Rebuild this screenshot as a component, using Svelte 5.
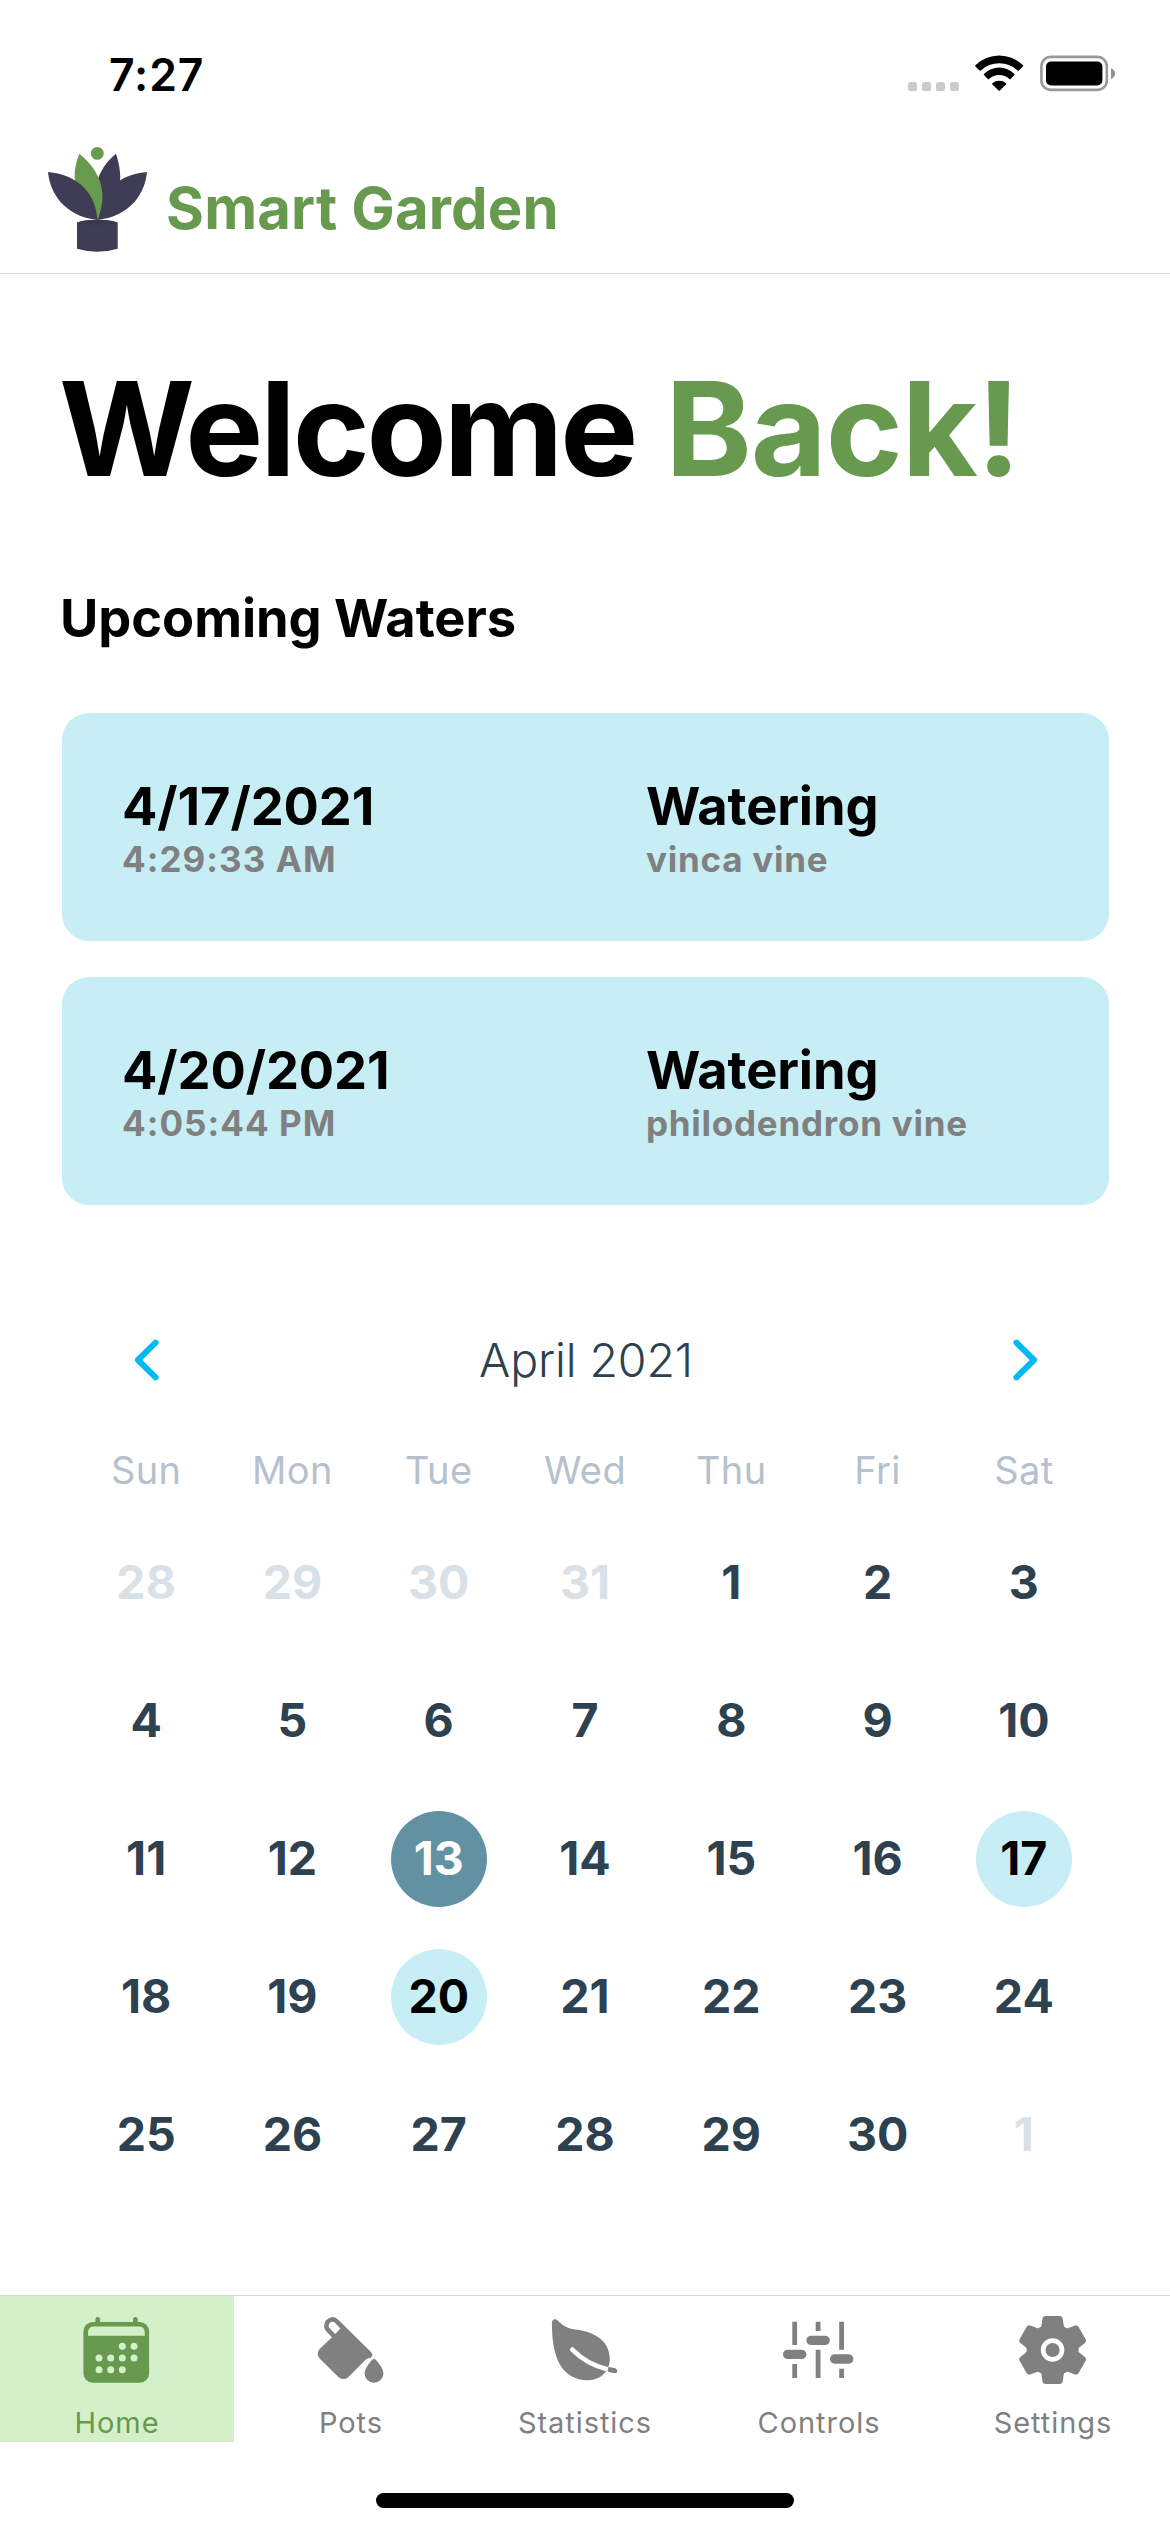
<script>
  const waters = [
    { date: '4/17/2021', time: '4:29:33 AM', plant: 'vinca vine' },
    { date: '4/20/2021', time: '4:05:44 PM', plant: 'philodendron vine' }
  ];
  const weekdays = ['Sun', 'Mon', 'Tue', 'Wed', 'Thu', 'Fri', 'Sat'];

  // 35 cells starting at Sunday, March 28
  const days = Array.from({ length: 35 }, (_, i) => {
    const n = i - 3;
    if (n < 1) return { label: 31 + n, kind: 'outside' };
    if (n > 30) return { label: n - 30, kind: 'outside' };
    const kind = n === 13 ? 'today' : n === 17 || n === 20 ? 'marked' : '';
    return { label: n, kind };
  });

  const tabs = ['Home', 'Pots', 'Statistics', 'Controls', 'Settings'];
  const dots = [
    [50.3, 41.3], [62, 41.3],
    [27, 53], [38.7, 53], [50.3, 53], [62, 53],
    [27, 64.7], [38.7, 64.7], [50.3, 64.7]
  ];
  const teeth = [0, 60, 120, 180, 240, 300];
</script>

<div class="screen">
  <div class="status">
    <span class="clock">7:27</span>
    <div class="indicators">
      <svg width="51" height="36" viewBox="0 0 51 36" fill="#cbcbcb">
        <rect x="0" y="27" width="9" height="9" rx="2.6" />
        <rect x="14" y="27" width="9" height="9" rx="2.6" />
        <rect x="28" y="27" width="9" height="9" rx="2.6" />
        <rect x="42" y="27" width="9" height="9" rx="2.6" />
      </svg>
      <svg width="49" height="36" viewBox="0 0 49 36">
        <path d="M0.4 10.2A34 34 0 0 1 48 10.2Q48.6 10.8 48 11.4L43.8 15.4Q43.2 16 42.6 15.4A27 27 0 0 0 5.8 15.4Q5.2 16 4.6 15.4L0.4 11.4Q-0.2 10.8 0.4 10.2Z" />
        <path d="M9 18.9A21.5 21.5 0 0 1 39.4 18.9Q40 19.5 39.4 20.1L35.6 23.9Q35 24.5 34.4 23.9A15.5 15.5 0 0 0 14 23.9Q13.4 24.5 12.8 23.9L9 20.1Q8.4 19.5 9 18.9Z" />
        <path d="M17.4 28.2A10.6 10.6 0 0 1 31 28.2Q31.6 28.8 31 29.4L24.8 35.6Q24.2 36.2 23.6 35.6L17.4 29.4Q16.8 28.8 17.4 28.2Z" />
      </svg>
      <svg width="75" height="37" viewBox="0 0 75 37">
        <rect x="1.4" y="1.9" width="65.4" height="33" rx="9.5" fill="none" stroke="#999" stroke-width="2.6" />
        <rect x="6" y="6.5" width="56.4" height="24" rx="5" />
        <path d="M71 13.2Q75 14.7 75 18.6T71 24.2Z" fill="#8f8f8f" />
      </svg>
    </div>
  </div>

  <header>
    <svg class="logo" width="100" height="106" viewBox="0 0 100 106">
      <g fill="#3f3d56">
        <path d="M68 6.7C54 18 41 38 49.3 73C74 58 76 30 68 6.7Z" />
        <path d="M99 25C68 28 50 47 49.3 73C83 69 97 46 99 25Z" />
      </g>
      <path d="M31.3 6.7C24 25 22 48 49.3 73C60 48 54 25 31.3 6.7Z" fill="#679b4e" />
      <g fill="#3f3d56">
        <path d="M0 25C31 28 48 47 49.3 73C16 69 2 46 0 25Z" />
        <path d="M29 75.2Q49.3 70.2 69.7 75.2V101.7Q49.3 107.7 29 101.7Z" />
      </g>
      <ellipse cx="49.3" cy="75.2" rx="18" ry="2.5" fill="#3a3850" />
      <circle cx="49.3" cy="6.4" r="6.4" fill="#679b4e" />
    </svg>
    <span class="brand">Smart Garden</span>
  </header>

  <main>
    <h1><span>Welcome</span> <span class="back">Back!</span></h1>
    <h2>Upcoming Waters</h2>

    <div class="cards">
      {#each waters as w}
        <section class="card">
          <div>
            <div class="lead">{w.date}</div>
            <div class="sub time">{w.time}</div>
          </div>
          <div>
            <div class="lead">Watering</div>
            <div class="sub">{w.plant}</div>
          </div>
        </section>
      {/each}
    </div>

    <section class="calendar">
      <div class="month">
        <svg width="32" height="48" viewBox="0 0 32 48"><path d="M25.6 6.6L8 24L25.6 41.4" /></svg>
        <span>April 2021</span>
        <svg width="32" height="48" viewBox="0 0 32 48"><path d="M6.4 6.6L24 24L6.4 41.4" /></svg>
      </div>
      <div class="weekdays">
        {#each weekdays as d}<span>{d}</span>{/each}
      </div>
      <div class="days">
        {#each days as d}<div class="cell"><span class="day {d.kind}">{d.label}</span></div>{/each}
      </div>
    </section>
  </main>

  <nav>
    {#each tabs as tab}
      <div class="tab" class:active={tab === 'Home'}>
        <svg width="90" height="90" viewBox="0 0 90 90" fill="currentColor">
          {#if tab === 'Home'}
            <rect x="23.4" y="12" width="4.7" height="9" rx="2.3" />
            <rect x="61" y="12" width="4.7" height="9" rx="2.3" />
            <rect x="11.4" y="17" width="65.7" height="60.7" rx="9.5" />
            <path class="cut" d="M16.1 30.7V27.3Q16.1 21.4 22 21.4H66.8Q72.7 21.4 72.7 27.3V30.7Z" />
            {#each dots as [x, y]}<circle class="cut" cx={x} cy={y} r="3.5" />{/each}
          {:else if tab === 'Pots'}
            <path
              fill-rule="evenodd"
              d="M32 14.4L65.2 47.2Q67.4 49.6 65.4 52Q64.6 53.2 62.6 53.2Q61 53.4 59.6 54.8L42.2 72.2Q37.4 76 32.6 72.2L13.6 53.4Q9.8 48.8 13.6 44L26 32.2L20.4 26.6Q16 21.4 19.8 15.6Q25.6 9.2 32 14.4ZM29 17.8Q26.2 15.6 23.6 18.2Q21.4 21 23.8 23.6L29.2 29L34.4 23.4Z"
            />
            <path d="M66 55Q68 52.8 70 55C73 58.4 77.4 63.8 77.4 68.6A9.4 9.2 0 0 1 58.6 68.6C58.6 63.8 63 58.4 66 55Z" />
          {:else if tab === 'Statistics'}
            <path d="M11.9 18C11.9 14.2 15.4 13 18.2 16C23.6 21.4 28 23.4 35 24.4C50 26 69.8 33 69.8 54C69.8 66 60.5 75.2 48.3 75.2C21 75.2 11.9 52 11.9 18Z" />
            <path class="vein" d="M32.3 44.6Q47 59.5 67.4 64.2" />
            <path class="halo" d="M66.6 64L68 64.4" />
            <path class="stem" d="M68 64.3L75 65.7" />
            <path class="stem-end" d="M71 64.9L75 65.7" />
          {:else if tab === 'Controls'}
            <path d="M18.3 16.7h4.8V40h-4.8zM18.3 59h4.8V73h-4.8zM41.7 16.7h4.8V26h-4.8zM41.7 44.7h4.8V73h-4.8zM65.2 16.7h4.8V44.7h-4.8zM65.2 63.7h4.8V73h-4.8z" />
            <rect x="9" y="44.7" width="23.4" height="9.4" rx="4.7" />
            <rect x="32.4" y="30.7" width="23.4" height="9.4" rx="4.7" />
            <rect x="56" y="49.3" width="23.4" height="9.4" rx="4.7" />
          {:else}
            <g transform="translate(44.6 45)">
              <circle r="26" />
              {#each teeth as a}
                <path
                  transform="rotate({a})"
                  d="M-15.5 -21Q-11.8 -21.2 -11.2 -24L-10.2 -31Q-9.7 -34 -6.8 -34H6.8Q9.7 -34 10.2 -31L11.2 -24Q11.8 -21.2 15.5 -21Z"
                />
              {/each}
              <circle class="ring" r="9.4" />
            </g>
          {/if}
        </svg>
        <span>{tab}</span>
      </div>
    {/each}
  </nav>
  <div class="home-bar"></div>
</div>

<style>
  :global(body) {
    background: #fff;
  }
  .screen {
    width: 1170px;
    height: 2532px;
    display: flex;
    flex-direction: column;
    overflow: hidden;
    background: #fff;
    color: #000;
    font-family: Inter, 'Liberation Sans', sans-serif;
  }
  svg {
    display: block;
    flex: none;
  }
  .status {
    height: 132px;
    box-sizing: border-box;
    display: flex;
    justify-content: space-between;
    align-items: flex-start;
    padding: 55px 55px 0 109px;
  }
  .clock {
    font-size: 44.5px;
    font-weight: 600;
    line-height: 40px;
    letter-spacing: 0.9px;
  }
  .indicators {
    display: flex;
    gap: 16px;
  }
  header {
    height: 142px;
    box-sizing: border-box;
    border-bottom: 1px solid #d8d8d8;
    display: flex;
    align-items: flex-start;
    padding: 15px 0 0 48px;
  }
  .brand {
    margin: 26px 0 0 18px;
    font-size: 58px;
    font-weight: 700;
    line-height: 70px;
    letter-spacing: 0.15px;
    color: #67994f;
  }
  main {
    flex: 1;
    padding: 0 61px 0 62px;
  }
  h1 {
    margin: 80px 0 0 -3px;
    font-size: 131px;
    font-weight: 700;
    line-height: 150px;
    letter-spacing: -3.1px;
    white-space: nowrap;
  }
  .back {
    margin-left: 2px;
    color: #67994f;
    letter-spacing: -1.1px;
  }
  h2 {
    margin: 82px 0 63px -2px;
    font-size: 52.4px;
    font-weight: 700;
    line-height: 64px;
    letter-spacing: -0.05px;
  }
  .cards {
    display: grid;
    gap: 36px;
  }
  .card {
    height: 228px;
    box-sizing: border-box;
    padding: 62px 0 0 60px;
    display: grid;
    grid-template-columns: 524px 1fr;
    border-radius: 27px;
    background: #c7eef5;
  }
  .lead {
    font-size: 52.4px;
    font-weight: 700;
    line-height: 62px;
    letter-spacing: -0.1px;
  }
  .sub {
    font-size: 35px;
    font-weight: 700;
    line-height: 44px;
    letter-spacing: 0.75px;
    color: #808080;
  }
  .time {
    letter-spacing: 1.05px;
  }
  .calendar {
    width: 1024px;
    margin: 115px 0 0 11px;
  }
  .month {
    height: 80px;
    display: flex;
    align-items: center;
    justify-content: space-between;
    padding: 0 55px 0 57px;
    font-size: 46.5px;
    font-weight: 300;
    letter-spacing: -0.15px;
    color: #2d4150;
  }
  .month path {
    fill: none;
    stroke: #00bbf2;
    stroke-width: 6;
    stroke-linecap: round;
    stroke-linejoin: round;
  }
  .weekdays {
    display: grid;
    grid-template-columns: repeat(7, 1fr);
    margin: 45px 0 19px;
    font-size: 38px;
    line-height: 50px;
    letter-spacing: 0.4px;
    text-align: center;
    color: #b6c1cd;
  }
  .days {
    display: grid;
    grid-template-columns: repeat(7, 1fr);
    grid-auto-rows: 138px;
  }
  .cell {
    display: flex;
    align-items: center;
    justify-content: center;
  }
  .day {
    width: 96px;
    height: 96px;
    box-sizing: border-box;
    padding-bottom: 2px;
    border-radius: 50%;
    font-size: 46.5px;
    font-weight: 700;
    line-height: 94px;
    text-align: center;
    color: #2d4150;
  }
  .outside {
    color: #d9e1e8;
  }
  .today {
    background: #6391a4;
    color: #fff;
  }
  .marked {
    background: #c7eef5;
    color: #000;
  }
  nav {
    display: grid;
    grid-template-columns: repeat(5, 1fr);
    border-top: 1px solid #d4d5d4;
  }
  .tab {
    height: 146px;
    box-sizing: border-box;
    padding-top: 9px;
    display: flex;
    flex-direction: column;
    align-items: center;
    color: #808080;
    --surface: #fff;
  }
  .active {
    --surface: #d4f0c8;
    background: var(--surface);
    color: #67994f;
  }
  .tab span {
    margin-top: 10px;
    font-size: 29px;
    line-height: 36px;
    letter-spacing: 0.95px;
  }
  .cut {
    fill: var(--surface);
  }
  .vein,
  .stem,
  .stem-end,
  .halo,
  .ring {
    fill: none;
    stroke-width: 4.7;
  }
  .vein {
    stroke: var(--surface);
    stroke-linecap: round;
  }
  .halo,
  .ring {
    stroke: var(--surface);
  }
  .stem,
  .stem-end {
    stroke: currentColor;
  }
  .stem-end {
    stroke-linecap: round;
  }
  .home-bar {
    width: 418px;
    height: 15px;
    margin: 51px auto 24px;
    border-radius: 8px;
    background: #000;
  }
</style>
